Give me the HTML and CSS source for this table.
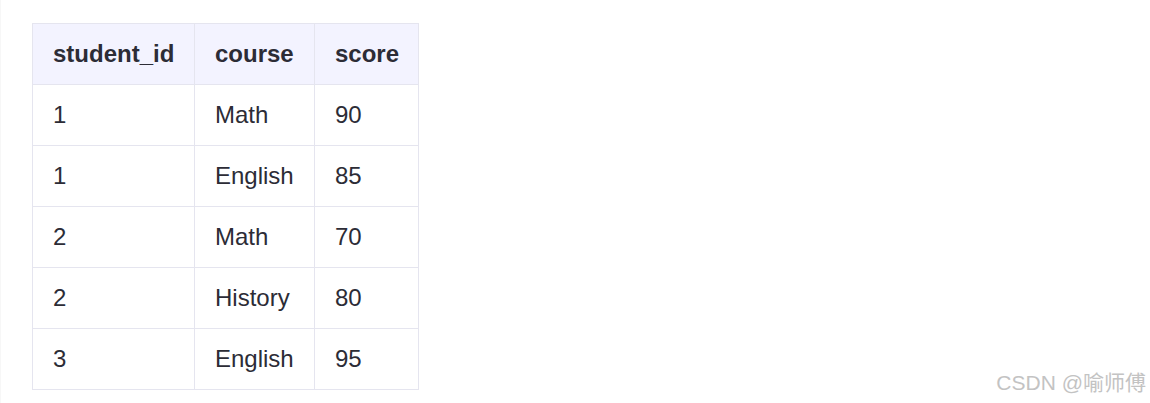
FILE: index.html
```html
<!DOCTYPE html>
<html lang="en">
<head>
<meta charset="utf-8">
<title>Table</title>
<link rel="stylesheet" href="styles.css">
</head>
<body>
<div class="page">
  <table class="data">
    <colgroup>
      <col class="c-id">
      <col class="c-course">
      <col class="c-score">
    </colgroup>
    <thead>
      <tr><th>student_id</th><th>course</th><th>score</th></tr>
    </thead>
    <tbody>
      <tr><td>1</td><td>Math</td><td>90</td></tr>
      <tr><td>1</td><td>English</td><td>85</td></tr>
      <tr><td>2</td><td>Math</td><td>70</td></tr>
      <tr><td>2</td><td>History</td><td>80</td></tr>
      <tr><td>3</td><td>English</td><td>95</td></tr>
    </tbody>
  </table>
  <div class="watermark">CSDN @喻师傅</div>
</div>
</body>
</html>
```
FILE: styles.css
```css
html, body {
  margin: 0;
  padding: 0;
  background: #ffffff;
}
.page {
  position: relative;
  box-sizing: border-box;
  width: 1150px;
  height: 403px;
  padding: 23px 0 0 32px;
  border-left: 1px solid #f7f7f7;
  font-family: "Liberation Sans", Arial, "Noto Sans CJK SC", sans-serif;
  color: #2c2c36;
  overflow: hidden;
}
.page .data {
  margin-left: -1px;
}
.data {
  border-collapse: collapse;
  table-layout: fixed;
  width: 387px;
  font-size: 24px;
}
.c-id { width: 162px; }
.c-course { width: 120px; }
.c-score { width: 104px; }
.data th,
.data td {
  border: 1px solid #e5e5ef;
  padding: 12px 20px;
  line-height: 36px;
  text-align: left;
  white-space: nowrap;
  overflow: visible;
}
.data th {
  background: #f3f3ff;
  font-weight: bold;
}
.watermark {
  position: absolute;
  right: 4px;
  bottom: 6px;
  font-size: 21px;
  line-height: 28px;
  color: #c3c3c3;
  text-shadow: 0 0 1px #ffffff;
  font-family: "Liberation Sans", Arial, "Noto Sans CJK SC", sans-serif;
}
```
